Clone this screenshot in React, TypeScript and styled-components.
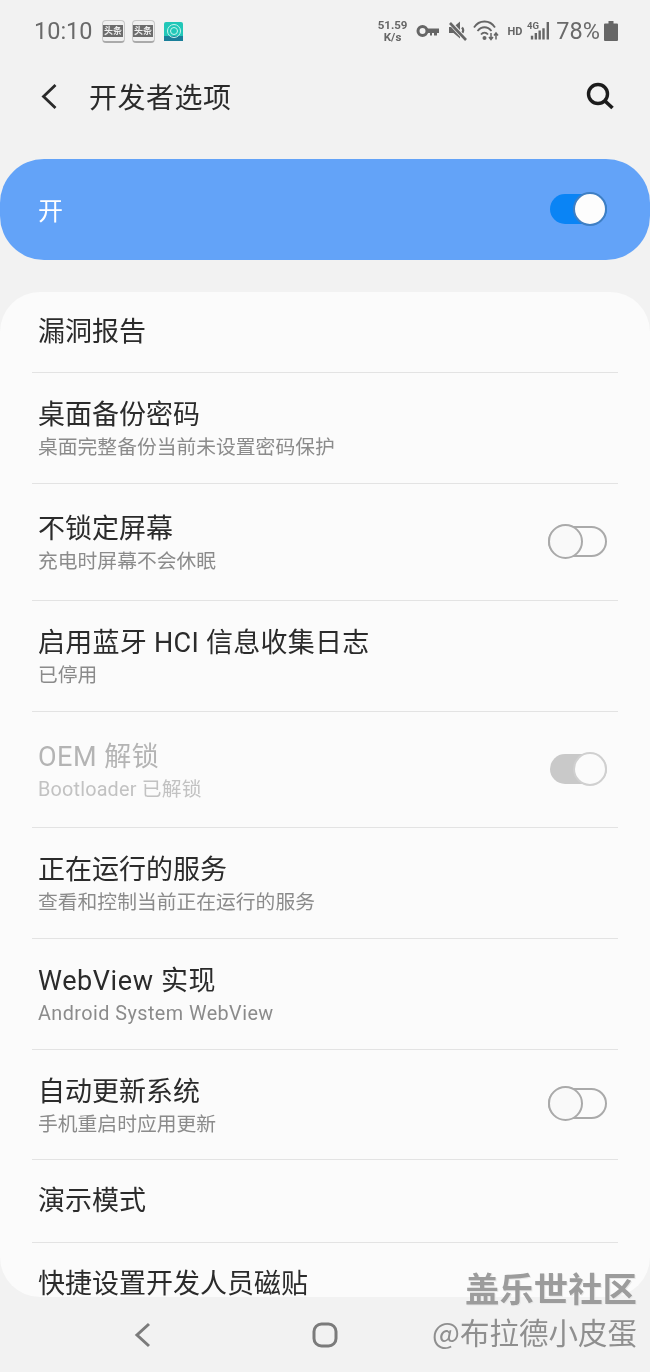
import React from "react";
import styled, { createGlobalStyle } from "styled-components";

const Global = createGlobalStyle`
  html, body { margin: 0; padding: 0; background: #f2f2f2; }
  body { font-family: "Roboto", "Noto Sans CJK SC", sans-serif; }
`;

const Page = styled.div`
  position: relative;
  width: 650px;
  height: 1372px;
  overflow: hidden;
  background: #f2f2f2;
  display: flex;
  flex-direction: column;
  filter: blur(0.35px);
`;

const StatusBar = styled.div`
  height: 62px;
  display: flex;
  align-items: center;
  justify-content: space-between;
  padding: 0 32px 0 34px;
  color: #666;
`;

const StatusGroup = styled.div`
  display: flex;
  align-items: center;
`;

const Time = styled.span`
  font-size: 23.5px;
  color: #6a6a6a;
  margin-right: 9px;
`;

const NewsIcon = styled.span`
  width: 23px;
  height: 23px;
  margin-right: 7px;
  border-radius: 4px;
  border: 1px solid #c8c8c8;
  border-bottom: 2px solid #aaa;
  box-sizing: border-box;
  background: #f0f0f0;
  display: flex;
  align-items: center;
  justify-content: center;
`;

const NewsLabel = styled.span`
  background: #6c6c6c;
  color: #eee;
  font-size: 9px;
  line-height: 12px;
  font-weight: 700;
  padding: 0 1px;
  white-space: nowrap;
  font-family: "Noto Sans CJK SC", sans-serif;
`;

const AppBadge = styled.svg`
  margin-left: 2px;
`;

const Speed = styled.span`
  font-size: 11.5px;
  line-height: 12px;
  font-weight: 700;
  text-align: center;
  color: #666;
  margin-right: 9px;
`;

const StatusIcon = styled.svg<{ $gap: number }>`
  margin-left: ${(p) => p.$gap}px;
`;

const HdLabel = styled.span`
  font-size: 11px;
  font-weight: 700;
  color: #666;
  margin: 0 5px 0 8px;
`;

const Percent = styled.span`
  font-size: 23.5px;
  color: #6a6a6a;
  margin: 0 4px 0 7px;
`;

const Header = styled.header`
  height: 68px;
  display: flex;
  align-items: center;
  padding: 0 35px 0 40px;
  margin-bottom: 29px;
`;

const HeaderTitle = styled.h1`
  flex: 1;
  margin: 0 0 0 31px;
  font-size: 28px;
  font-weight: 400;
  color: #2a2a2a;
  letter-spacing: 0.5px;
  font-family: "Noto Sans CJK SC", sans-serif;
`;

const MasterBar = styled.div`
  height: 101px;
  box-sizing: border-box;
  background: #63a3f8;
  border-radius: 44px;
  display: flex;
  align-items: center;
  justify-content: space-between;
  padding: 0 43px 2px 38px;
  margin-bottom: 32px;
`;

const MasterLabel = styled.span`
  font-size: 25px;
  color: #fff;
  font-family: "Noto Sans CJK SC", sans-serif;
`;

const Track = styled.div<{ $on?: boolean; $color?: string }>`
  position: relative;
  width: ${(p) => (p.$on ? 57 : 59)}px;
  height: ${(p) => (p.$on ? 30 : 31)}px;
  box-sizing: border-box;
  border-radius: 16px;
  background: ${(p) => (p.$on ? p.$color : "transparent")};
  border: ${(p) => (p.$on ? "none" : "2px solid #aaa")};
  flex: none;
`;

const RowToggle = styled.div`
  display: flex;
  margin-bottom: 2px;
`;

const Knob = styled.div<{ $on?: boolean; $ring: string; $fill: string }>`
  position: absolute;
  top: ${(p) => (p.$on ? "-2px" : "-4px")};
  ${(p) => (p.$on ? "right: 0;" : "left: -2px;")}
  width: ${(p) => (p.$on ? 34 : 35)}px;
  height: ${(p) => (p.$on ? 34 : 35)}px;
  box-sizing: border-box;
  border-radius: 50%;
  background: ${(p) => p.$fill};
  border: 2px solid ${(p) => p.$ring};
`;

const Card = styled.main`
  height: 1005px;
  background: #fbfbfb;
  border-radius: 40px;
  padding: 0 32px;
`;

const Row = styled.div<{ $h: number; $last?: boolean }>`
  height: ${(p) => p.$h}px;
  box-sizing: border-box;
  display: flex;
  align-items: ${(p) => (p.$last ? "flex-start" : "center")};
  justify-content: space-between;
  padding: ${(p) => (p.$last ? "23px" : "0")} 11px 0 6px;
  border-bottom: ${(p) => (p.$last ? "none" : "1px solid #e3e3e3")};
`;

const RowText = styled.div<{ $sub?: boolean }>`
  display: flex;
  flex-direction: column;
  gap: 1px;
  padding-top: ${(p) => (p.$sub ? 2 : 0)}px;
`;

const RowTitle = styled.div<{ $off?: boolean; $track?: number }>`
  font-size: 27px;
  line-height: 36px;
  letter-spacing: ${(p) => p.$track ?? 0}px;
  color: ${(p) => (p.$off ? "#b4b4b4" : "#2b2b2b")};
  font-family: "Roboto", "Noto Sans CJK SC", sans-serif;
  white-space: nowrap;
`;

const RowSub = styled.div<{ $off?: boolean; $track?: number }>`
  font-size: 19.8px;
  line-height: 27px;
  letter-spacing: ${(p) => p.$track ?? 0}px;
  color: ${(p) => (p.$off ? "#c2c2c2" : "#8b8b8b")};
  white-space: nowrap;
`;

const NavBar = styled.nav`
  flex: 1;
  display: flex;
  align-items: center;
  padding-left: 132px;
  gap: 160px;
`;

const Watermark = styled.div`
  position: absolute;
  right: 13px;
  bottom: 20px;
  text-align: right;
  color: #8f8f8f;
  font-family: "Noto Sans CJK SC", sans-serif;
`;

const WatermarkBrand = styled.div`
  font-size: 34.4px;
  line-height: 46px;
  font-weight: 700;
  color: #9c9c9c;
  text-shadow: 1px 1px 0 #e8e8e8;
`;

const WatermarkUser = styled.div`
  font-size: 29.5px;
  line-height: 42px;
`;

type Item = {
  h: number;
  title: string;
  sub?: string;
  off?: boolean;
  toggle?: "off" | "disabled";
  titleTrack?: number;
  subTrack?: number;
};

const items: Item[] = [
  { h: 81, title: "漏洞报告" },
  { h: 111, title: "桌面备份密码", sub: "桌面完整备份当前未设置密码保护" },
  { h: 117, title: "不锁定屏幕", sub: "充电时屏幕不会休眠", toggle: "off" },
  { h: 111, title: "启用蓝牙 HCI 信息收集日志", sub: "已停用", titleTrack: 0.27 },
  { h: 116, title: "OEM 解锁", sub: "Bootloader 已解锁", off: true, toggle: "disabled", titleTrack: 0.5, subTrack: 0.2 },
  { h: 111, title: "正在运行的服务", sub: "查看和控制当前正在运行的服务" },
  { h: 111, title: "WebView 实现", sub: "Android System WebView", titleTrack: 0.6, subTrack: 0.45 },
  { h: 110, title: "自动更新系统", sub: "手机重启时应用更新", toggle: "off" },
  { h: 83, title: "演示模式" },
  { h: 54, title: "快捷设置开发人员磁贴" },
];

const Toggle = ({ kind }: { kind: "master" | "off" | "disabled" }) => {
  if (kind === "off")
    return (
      <Track>
        <Knob $ring="#aaa" $fill="#f9f9f9" />
      </Track>
    );
  if (kind === "disabled")
    return (
      <Track $on $color="#c9c9c9">
        <Knob $on $ring="#d0d0d0" $fill="#fbfbfb" />
      </Track>
    );
  return (
    <Track $on $color="#0a84f5">
      <Knob $on $ring="#3f7fc4" $fill="#fdfdfd" />
    </Track>
  );
};

const App = () => (
  <Page>
    <Global />
    <StatusBar>
      <StatusGroup>
        <Time>10:10</Time>
        <NewsIcon><NewsLabel>头条</NewsLabel></NewsIcon>
        <NewsIcon><NewsLabel>头条</NewsLabel></NewsIcon>
        <AppBadge width="19" height="19" viewBox="0 0 19 19">
          <rect width="19" height="19" rx="2" fill="#22c7b8" />
          <rect y="14" width="19" height="5" fill="#1a7f9a" />
          <circle cx="10" cy="9" r="6.5" fill="none" stroke="#c9f5ee" strokeWidth="1" />
          <circle cx="10" cy="9" r="3.5" fill="none" stroke="#c9f5ee" strokeWidth="1" />
        </AppBadge>
      </StatusGroup>
      <StatusGroup>
        <Speed>51.59<br />K/s</Speed>
        <svg width="24" height="14" viewBox="0 0 24 14">
          <circle cx="6.5" cy="7" r="4.5" fill="none" stroke="#666" strokeWidth="3" />
          <path d="M11 4.5h12v4.5h-2v2.5h-3v-2.5h-2v2.5h-2V9h-3z" fill="#666" />
        </svg>
        <StatusIcon $gap={7} width="22" height="22" viewBox="0 0 22 22">
          <path d="M2 7h4.500l6.500-5.500v17L6.500 13H2z" fill="#666" />
          <path d="M15 7.500c1.500 1.500 1.500 4 0 5.500" fill="none" stroke="#666" strokeWidth="2.400" />
          <path d="M3 2.500 19 20" stroke="#f2f2f2" strokeWidth="4.500" />
          <path d="M3 3 19 20" stroke="#666" strokeWidth="2.600" />
        </StatusIcon>
        <StatusIcon $gap={4} width="26" height="22" viewBox="0 0 26 22">
          <g fill="none" stroke="#666" strokeWidth="1.8">
            <path d="M1 7.5C6-.5 17-.5 22 7.5" />
            <path d="M4.5 11c4-5 10-5 14 0" />
            <path d="M8 14.5c2-2.500 5-2.500 7 0" />
          </g>
          <circle cx="11.500" cy="18" r="2" fill="#666" />
          <path d="M18 13v6M16 17l2 2.500 2-2.500M23 19.500v-6M21 15.500l2-2.500 2 2.500" fill="none" stroke="#666" strokeWidth="1.500" />
        </StatusIcon>
        <HdLabel>HD</HdLabel>
        <svg width="22" height="22" viewBox="0 0 23 22">
          <text x="0" y="9" fontSize="10" fontWeight="700" fontFamily="Roboto, sans-serif" fill="#666">4G</text>
          <path d="M4 16h2.500v4H4zM8 13h2.500v7H8zM12 10.500h2.500V20H12zM16 8h2.500v12H16zM20.500 1.500H23V20h-2.500z" fill="#666" />
        </svg>
        <Percent>78%</Percent>
        <svg width="14" height="20" viewBox="0 0 14 20">
          <path d="M4.500 0h5v2.500H13a1 1 0 0 1 1 1V19a1 1 0 0 1-1 1H1a1 1 0 0 1-1-1V3.500a1 1 0 0 1 1-1h3.500z" fill="#666" />
        </svg>
      </StatusGroup>
    </StatusBar>

    <Header>
      <svg width="18" height="27" viewBox="0 0 18 27">
        <path d="M15.500 2 3.500 13.500 15.500 25" fill="none" stroke="#2a2a2a" strokeWidth="2.800" />
      </svg>
      <HeaderTitle>开发者选项</HeaderTitle>
      <svg width="30" height="30" viewBox="0 0 30 30">
        <circle cx="13" cy="13" r="9.500" fill="none" stroke="#1c1c1c" strokeWidth="3.400" />
        <path d="M20 20l7.500 7" stroke="#1c1c1c" strokeWidth="3.600" />
      </svg>
    </Header>

    <MasterBar>
      <MasterLabel>开</MasterLabel>
      <Toggle kind="master" />
    </MasterBar>

    <Card>
      {items.map((it, i) => (
        <Row key={it.title} $h={it.h} $last={i === items.length - 1}>
          <RowText $sub={!!it.sub}>
            <RowTitle $off={it.off} $track={it.titleTrack}>{it.title}</RowTitle>
            {it.sub && <RowSub $off={it.off} $track={it.subTrack}>{it.sub}</RowSub>}
          </RowText>
          {it.toggle && (
            <RowToggle>
              <Toggle kind={it.toggle} />
            </RowToggle>
          )}
        </Row>
      ))}
    </Card>

    <NavBar>
      <svg width="20" height="28" viewBox="0 0 20 28">
        <path d="M17 3 5 14l12 11" fill="none" stroke="#7b7b7b" strokeWidth="3" />
      </svg>
      <svg width="26" height="26" viewBox="0 0 26 26">
        <rect x="2" y="2" width="22" height="22" rx="7.500" fill="none" stroke="#7b7b7b" strokeWidth="3" />
      </svg>
    </NavBar>

    <Watermark>
      <WatermarkBrand>盖乐世社区</WatermarkBrand>
      <WatermarkUser>@布拉德小皮蛋</WatermarkUser>
    </Watermark>
  </Page>
);

export default App;
